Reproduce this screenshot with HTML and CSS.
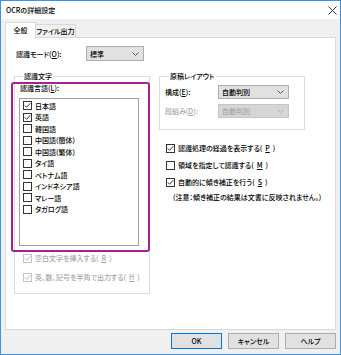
FILE: index.html
```html
<!DOCTYPE html>
<html lang="ja">
<head>
  <meta charset="UTF-8" />
  <title>OCRの詳細設定</title>
  <link rel="stylesheet" href="styles.css">
</head>
<body>

<div class="window">
  <!-- Title bar -->
  <div class="titlebar">
    <span class="title">OCRの詳細設定</span>
    <svg class="close" width="9" height="9" viewBox="0 0 9 9">
      <path d="M0.5 0.5L8.5 8.5M8.5 0.5L0.5 8.5" stroke="#333" stroke-width="1"/>
    </svg>
  </div>

  <div class="content">
    <div class="tabs">
      <div class="tab active">全般</div>
      <div class="tab">ファイル出力</div>
    </div>

    <div class="panel">
      <div class="mode-row">
        <span class="mode-label">認識モード(<u>O</u>):</span>
        <div class="select mode-select">
          <span>標準</span>
          <svg width="7" height="4" viewBox="0 0 7 4"><path d="M0.5 0.5L3.5 3.5L6.5 0.5" fill="none" stroke="#555"/></svg>
        </div>
      </div>

      <div class="columns">
        <!-- left column -->
        <fieldset class="group group-chars">
          <legend>認識文字</legend>
          <div class="list-label">認識言語(<u>L</u>):</div>
          <div class="listbox">
            <div class="item"><span class="box"><svg width="7" height="7" viewBox="0 0 7 7"><path d="M0.8 3.4L2.6 5.3L6.3 1.2" fill="none" stroke="#333"/></svg></span>日本語</div>
            <div class="item"><span class="box"><svg width="7" height="7" viewBox="0 0 7 7"><path d="M0.8 3.4L2.6 5.3L6.3 1.2" fill="none" stroke="#333"/></svg></span>英語</div>
            <div class="item"><span class="box"></span>韓国語</div>
            <div class="item"><span class="box"></span>中国語(簡体)</div>
            <div class="item"><span class="box"></span>中国語(繁体)</div>
            <div class="item"><span class="box"></span>タイ語</div>
            <div class="item"><span class="box"></span>ベトナム語</div>
            <div class="item"><span class="box"></span>インドネシア語</div>
            <div class="item"><span class="box"></span>マレー語</div>
            <div class="item"><span class="box"></span>タガログ語</div>
          </div>
          <div class="check disabled first"><span class="box"><svg width="7" height="7" viewBox="0 0 7 7"><path d="M0.8 3.4L2.6 5.3L6.3 1.2" fill="none" stroke="#b5b5b5"/></svg></span>空白文字を挿入する(<u>R</u>)</div>
          <div class="check disabled second"><span class="box"><svg width="7" height="7" viewBox="0 0 7 7"><path d="M0.8 3.4L2.6 5.3L6.3 1.2" fill="none" stroke="#b5b5b5"/></svg></span>英、数、記号を半角で出力する(<u>H</u>)</div>
        </fieldset>

        <!-- right column -->
        <div class="col-right">
          <fieldset class="group group-layout">
            <legend>原稿レイアウト</legend>
            <div class="layout-row">
              <span class="layout-label">構成(<u>E</u>):</span>
              <div class="select layout-select">
                <span>自動判別</span>
                <svg width="7" height="4" viewBox="0 0 7 4"><path d="M0.5 0.5L3.5 3.5L6.5 0.5" fill="none" stroke="#555"/></svg>
              </div>
            </div>
            <div class="layout-row disabled">
              <span class="layout-label">段組み(<u>D</u>):</span>
              <div class="select layout-select">
                <span>自動判別</span>
                <svg width="7" height="4" viewBox="0 0 7 4"><path d="M0.5 0.5L3.5 3.5L6.5 0.5" fill="none" stroke="#b0b0b0"/></svg>
              </div>
            </div>
          </fieldset>

          <div class="options">
            <div class="check"><span class="box"><svg width="7" height="7" viewBox="0 0 7 7"><path d="M0.8 3.4L2.6 5.3L6.3 1.2" fill="none" stroke="#333"/></svg></span>認識処理の経過を表示する(<u>P</u>)</div>
            <div class="check"><span class="box"></span>領域を指定して認識する(<u>M</u>)</div>
            <div class="check"><span class="box"><svg width="7" height="7" viewBox="0 0 7 7"><path d="M0.8 3.4L2.6 5.3L6.3 1.2" fill="none" stroke="#333"/></svg></span>自動的に傾き補正を行う(<u>S</u>)</div>
            <div class="note">(注意：傾き補正の結果は文書に反映されません。)</div>
          </div>
        </div>
      </div>

      <!-- annotation frame over the language list -->
      <div class="highlight"></div>
    </div>

    <div class="buttons">
      <button class="btn default">OK</button>
      <button class="btn">キャンセル</button>
      <button class="btn">ヘルプ</button>
    </div>
  </div>
</div>

</body>
</html>
```

FILE: styles.css
```css
body {
  margin: 0;
  font-family: "Noto Sans CJK JP", "Noto Sans", sans-serif;
  font-size: 7px;
  font-weight: 500;
  line-height: 10px;
  font-feature-settings: "palt";
  color: #000;
  background: #fff;
}

u {
  text-decoration-thickness: 1px;
  text-underline-offset: 1px;
}

.window {
  width: 341px;
  height: 355px;
  box-sizing: border-box;
  border: 1px solid #3d93de;
  background: #f0f0f0;
  display: flex;
  flex-direction: column;
}

.titlebar {
  height: 18px;
  background: #fff;
  display: flex;
  align-items: center;
  justify-content: space-between;
  padding: 0 3px 0 5px;
}

.content {
  flex: 1;
  padding: 3px 4px 0 4px;
}

/* Tabs */
.tabs {
  display: flex;
  align-items: flex-end;
  height: 16px;
  margin-bottom: -1px;
  position: relative;
  z-index: 1;
}

.tab {
  box-sizing: border-box;
  height: 13px;
  width: 40px;
  border: 1px solid #d9d9d9;
  border-bottom: none;
  border-left: none;
  background: #f0f0f0;
  text-align: center;
  line-height: 12px;
  margin-bottom: 1px;
  white-space: nowrap;
}

.tab.active {
  width: 31px;
  height: 16px;
  margin-bottom: 0;
  background: #fff;
  border-left: 1px solid #d9d9d9;
  line-height: 14px;
}

/* Panel */
.panel {
  position: relative;
  box-sizing: border-box;
  height: 293px;
  border: 1px solid #d9d9d9;
  background: #fff;
  padding: 8px 0 0 8px;
}

.mode-row {
  display: flex;
  align-items: center;
  padding-left: 2px;
}

.mode-label {
  width: 70px;
}

.select {
  box-sizing: border-box;
  height: 15px;
  border: 1px solid #adadad;
  background: #e1e1e1;
  display: flex;
  align-items: center;
  justify-content: space-between;
  padding: 0 4px 0 3px;
}

.mode-select {
  width: 58px;
}

.columns {
  display: flex;
  align-items: flex-start;
  gap: 9px;
  margin-top: 10px;
}

.group {
  margin: 0;
  min-width: 0;
  box-sizing: border-box;
  border: 1px solid #dcdcdc;
}

.group legend {
  padding: 0 1px;
  margin-left: 4px;
  line-height: 10px;
}

.group-chars {
  width: 136px;
  padding: 2px 4px 10px 4px;
}

.list-label {
  margin-left: 1px;
}

.listbox {
  box-sizing: border-box;
  width: 120px;
  height: 148px;
  margin-top: 5px;
  border: 1px solid #a0a0a0;
  padding: 1px 0 0 3px;
}

.item {
  height: 11.5px;
  display: flex;
  align-items: center;
  gap: 3px;
  white-space: nowrap;
}

.box {
  box-sizing: border-box;
  width: 9px;
  height: 9px;
  flex: none;
  border: 1px solid #333;
  background: #fff;
  display: flex;
  align-items: center;
  justify-content: center;
}

.check {
  height: 12px;
  display: flex;
  align-items: center;
  gap: 3px;
  white-space: nowrap;
}

.check.disabled {
  color: #a6a6a6;
  padding-left: 4px;
}

.check.disabled .box {
  border-color: #c4c4c4;
}

.check.first {
  margin-top: 6px;
}

.check.second {
  margin-top: 7px;
}

/* Right column */
.col-right {
  width: 146px;
}

.group-layout {
  width: 146px;
  padding: 4px 4px 11px 5px;
}

.layout-row {
  display: flex;
  align-items: center;
}

.layout-row + .layout-row {
  margin-top: 5px;
}

.layout-label {
  width: 53px;
}

.layout-select {
  width: 71px;
  height: 14px;
}

.layout-row.disabled {
  color: #a6a6a6;
}

.layout-row.disabled .select {
  background: #d6d6d6;
  border-color: #c6c6c6;
}

.options {
  padding-left: 7px;
  margin-top: 12px;
}

.options .check + .check {
  margin-top: 5px;
}

.note {
  margin-top: 4px;
  padding-left: 7px;
  white-space: nowrap;
}

.highlight {
  position: absolute;
  left: 5px;
  top: 44px;
  width: 135px;
  height: 166px;
  border: 2px solid #a2238f;
  border-radius: 3px;
  pointer-events: none;
}

/* Buttons */
.buttons {
  display: flex;
  justify-content: flex-end;
  gap: 6px;
  margin-top: 3px;
}

.btn {
  box-sizing: border-box;
  width: 51px;
  height: 16px;
  padding: 0;
  font: inherit;
  font-feature-settings: "palt";
  color: #000;
  background: #e1e1e1;
  border: 1px solid #adadad;
}

.btn.default {
  border-color: #0078d7;
}
```
